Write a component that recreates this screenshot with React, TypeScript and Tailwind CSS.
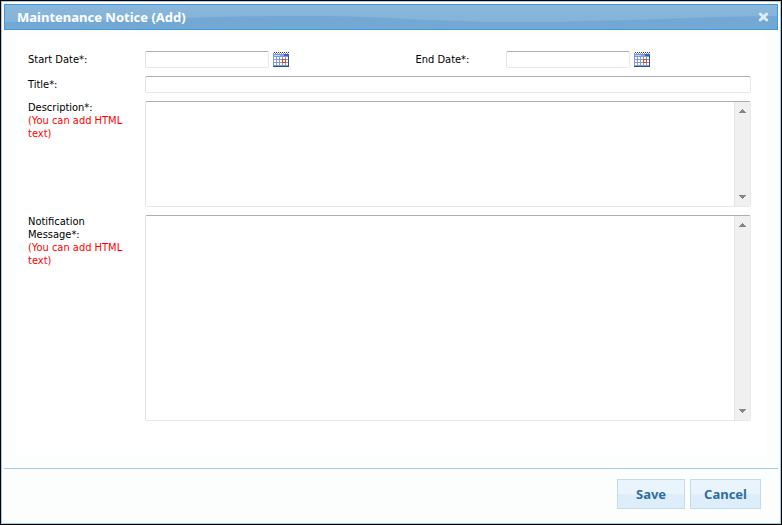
import { useState } from 'react';
import type { ReactNode } from 'react';

const FIELD = 'rounded-[2px] border border-[#e3e9ef] border-t-[#abadb3] border-l-[#e2e3ea] bg-white outline-none';

function CalendarIcon() {
    return (
        <svg width="16" height="15" viewBox="0 0 16 15" shapeRendering="crispEdges" aria-hidden="true">
            <rect y="2" width="16" height="13" fill="#7f9bd6" />
            <path d="M0 2h16v2H0z" fill="#6f95ee" />
            <path d="M1 3h6v1H1z" fill="#c3d4fa" />
            <path d="M7 3h4v1H7z" fill="#86a8f2" />
            <path d="M11 2h5v2h-5z" fill="#3262d6" />
            <path d="M1 0.5h15" stroke="#333" strokeDasharray="1 1" />
            <path d="M0 1.5h16" stroke="#999" strokeDasharray="1 1" />
            {[5, 8, 11].map(y => (
                <g key={y} fill="#fff">
                    {[1, 4, 7, 10, 13].map(x => (
                        <rect key={x} x={x} y={y} width="2" height="2" />
                    ))}
                </g>
            ))}
            <path d="M9 7h4v4H9z" fill="#e8420f" />
            <path d="M10 8h2v2h-2z" fill="#fff" />
            <path d="M15 4h1v11H0v-1h15z" fill="#31517f" />
        </svg>
    );
}

function DateField({ id, label }: { id: string; label: string }) {
    return (
        <div className="flex items-center gap-1">
            <input id={id} type="text" aria-label={label} className={`${FIELD} h-[17px] w-[124px] px-1`} />
            <button type="button" aria-label={`Pick ${label}`} className="h-[15px] w-4">
                <CalendarIcon />
            </button>
        </div>
    );
}

function ScrollArrow({ up }: { up?: boolean }) {
    return (
        <svg width="7" height="4" viewBox="0 0 7 4" shapeRendering="crispEdges" aria-hidden="true">
            <path d={up ? 'M3 0h1v1h1v1h1v1h1v1H0V3h1V2h1V1h1z' : 'M0 0h7v1H6v1H5v1H4v1H3V3H2V2H1V1H0z'} fill="#858585" />
        </svg>
    );
}

function TextBox({ id, className }: { id: string; className: string }) {
    return (
        <div className={`${FIELD} flex min-w-0 flex-1 overflow-hidden ${className}`}>
            <textarea id={id} className="min-w-0 flex-1 resize-none px-1 outline-none" />
            <div className="flex w-4 shrink-0 flex-col items-center justify-between border-l border-[#e4e4e4] bg-[#f0f0f0] py-[7px]">
                <ScrollArrow up />
                <ScrollArrow />
            </div>
        </div>
    );
}

function Label({ htmlFor, children, hint }: { htmlFor: string; children: ReactNode; hint?: boolean }) {
    return (
        <label htmlFor={htmlFor} className="w-[117px] shrink-0 pr-4">
            {children}
            {hint && <span className="block text-[#ff0000]">(You can add HTML text)</span>}
        </label>
    );
}

function FooterButton({ children, onClick }: { children: ReactNode; onClick?: () => void }) {
    return (
        <button
            type="button"
            onClick={onClick}
            className="h-[30px] min-w-[68px] border border-[#c5dbec] bg-linear-to-b from-[#eaf4fd] from-50% to-[#deedfa] to-50% px-[13px] font-['Noto_Sans',sans-serif] text-[13px] font-bold text-[#2e6e9e]"
        >
            {children}
        </button>
    );
}

export default function App() {
    const [open, setOpen] = useState(true);
    const close = () => setOpen(false);

    if (!open) return null;

    return (
        <div className="min-h-screen border border-black bg-white font-['DejaVu_Sans_Condensed','DejaVu_Sans',sans-serif] text-[11px] leading-[13px] text-black">
            <div role="dialog" aria-labelledby="dialog-title" className="border border-[#a6c9e2] bg-[#fcfdfd] p-0.5">
                <header className="relative flex h-[26px] items-center justify-between border border-[#4297d7] bg-[#72a8d3] pr-2 pl-3">
                    {/* gloss */}
                    <svg className="absolute inset-0 h-full w-full" viewBox="0 0 772 24" preserveAspectRatio="none" aria-hidden="true">
                        <defs>
                            <linearGradient id="gloss" x1="0" y1="0" x2="0" y2="1">
                                <stop offset="0" stopColor="#8ab7db" />
                                <stop offset="1" stopColor="#84b3d9" />
                            </linearGradient>
                        </defs>
                        <path d="M0 17C110 17 180 11 300 11C390 11 420 17 510 17C610 17 660 12 772 11V0H0z" fill="url(#gloss)" />
                    </svg>
                    <h1 id="dialog-title" className="relative font-['Noto_Sans',sans-serif] text-[13px] font-bold text-white">
                        Maintenance Notice (Add)
                    </h1>
                    <button type="button" aria-label="Close" onClick={close} className="relative">
                        <svg width="11" height="10" viewBox="0 0 11 10" aria-hidden="true">
                            <path d="M2.3 2 8.7 8M8.7 2 2.3 8" stroke="#dcebf7" strokeWidth="3" strokeLinecap="round" />
                        </svg>
                    </button>
                </header>

                <form className="mx-3 mt-1.5 mb-3 flex flex-col gap-2 bg-white pt-[15px] pr-[15px] pb-[35px] pl-3">
                    <div className="flex">
                        <div className="flex w-1/2 items-center">
                            <Label htmlFor="start">Start Date*:</Label>
                            <DateField id="start" label="Start Date" />
                        </div>
                        <div className="flex w-1/2 items-center pl-[26px]">
                            <label htmlFor="end" className="w-[90px] shrink-0">End Date*:</label>
                            <DateField id="end" label="End Date" />
                        </div>
                    </div>
                    <div className="flex items-center">
                        <Label htmlFor="title">Title*:</Label>
                        <input id="title" type="text" className={`${FIELD} h-[17px] min-w-0 flex-1 px-1`} />
                    </div>
                    <div className="flex">
                        <Label htmlFor="description" hint>Description*:</Label>
                        <TextBox id="description" className="h-[106px]" />
                    </div>
                    <div className="flex">
                        <Label htmlFor="message" hint>Notification Message*:</Label>
                        <TextBox id="message" className="h-[206px]" />
                    </div>
                </form>

                <footer className="flex justify-end gap-[5px] border-t border-[#a6c9e2] pt-2.5 pr-[17px] pb-3">
                    <FooterButton>Save</FooterButton>
                    <FooterButton onClick={close}>Cancel</FooterButton>
                </footer>
            </div>
        </div>
    );
}
